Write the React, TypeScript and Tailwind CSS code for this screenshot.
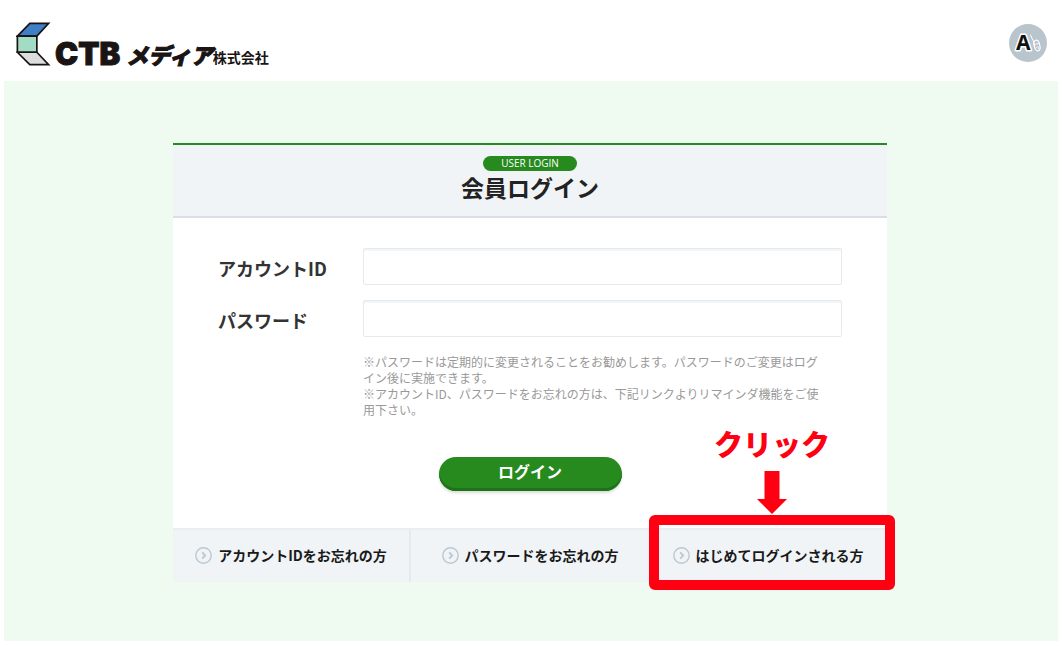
import type { ReactNode } from 'react';

function CompanyLogo() {
  return (
    <a href="#" className="flex items-end pt-[3px] text-[#1a1414]">
      <svg viewBox="50 38 104 131" className="h-[44px] w-[35px]" aria-hidden="true">
        <g stroke="#1a1414" strokeWidth="5" strokeLinejoin="miter">
          <path d="M54 80 L91 42 H147 L112 80 Z" fill="#3f7fc6" />
          <path d="M54 80 H112 V128 H54 Z" fill="#a3dcc4" />
          <path d="M54 128 H112 L147 165 H91 Z" fill="#dcdddd" />
        </g>
      </svg>
      <span className="ml-1 font-['Inter',sans-serif] text-[31px] leading-[24px] font-black [-webkit-text-stroke:1px_#1a1414]">
        CTB
      </span>
      <span className="ml-1.5 font-['Noto_Sans_CJK_JP',sans-serif] text-[22px] leading-[24px] font-black italic [-webkit-text-stroke:1px_#1a1414]">
        メディア
      </span>
      <span className="font-['Noto_Sans_CJK_JP',sans-serif] text-[14px] leading-[18px] font-bold">株式会社</span>
    </a>
  );
}

function LanguageButton() {
  return (
    <button type="button" aria-label="言語" className="h-[38px] w-[38px] rounded-full bg-[#b8c5cc]">
      <svg viewBox="0 0 38 38" className="h-full w-full" aria-hidden="true">
        <g fill="none" stroke="#fff" strokeLinecap="round" strokeLinejoin="round">
          <path d="M21.5 11 L24.5 17.5 L25.5 23" strokeWidth="1" />
          <ellipse cx="28" cy="21.5" rx="2.8" ry="5.4" strokeWidth="1.2" transform="rotate(-14 28 21.5)" />
          <path d="M26 20.5 L29.5 19.5 M27 24 C28 22 30 22 29.5 24.5" strokeWidth="0.9" />
        </g>
        <text
          x="7"
          y="26"
          fontFamily="Noto Sans"
          fontWeight="bold"
          fontSize="21"
          fill="#111"
          stroke="#fff"
          strokeWidth="3"
          strokeLinejoin="round"
          paintOrder="stroke"
        >
          A
        </text>
      </svg>
    </button>
  );
}

function CircleArrow() {
  return (
    <svg viewBox="0 0 17 17" className="h-[17px] w-[17px] shrink-0" fill="none" stroke="#b9c8d3" aria-hidden="true">
      <circle cx="8.5" cy="8.5" r="7.7" strokeWidth="1.4" />
      <path d="M7.2 5.4 L10.2 8.5 L7.2 11.6" strokeWidth="1.8" />
    </svg>
  );
}

function FooterLink({ children }: { children: ReactNode }) {
  return (
    <a
      href="#"
      className="flex h-full items-center justify-center gap-1.5 pb-0.5 text-[14px] leading-5 font-bold whitespace-nowrap text-[#1a1a1a]"
    >
      <CircleArrow />
      {children}
    </a>
  );
}

function ClickCallout() {
  return (
    <div className="pointer-events-none absolute -top-[15px] -right-2 -bottom-2 left-0 rounded-md border-10 border-[#ff0012]">
      <div className="absolute inset-x-0 bottom-full mb-[11px] flex flex-col items-center">
        <span className="text-[29px] leading-8 font-black text-[#ff0012]">クリック</span>
        <svg viewBox="0 0 30 43" className="mt-3 h-[43px] w-[30px]" aria-hidden="true">
          <path d="M7.5 0 H22.5 V28 H30 L15 43 L0 28 H7.5 Z" fill="#ff0012" />
        </svg>
      </div>
    </div>
  );
}

function FormRow({ id, label, type }: { id: string; label: string; type: string }) {
  return (
    <div className="flex items-center">
      <label htmlFor={id} className="w-[145px] shrink-0 pt-0.5 text-[18px] leading-7 font-bold text-[#333]">
        {label}
      </label>
      <input
        id={id}
        type={type}
        className="h-[37px] min-w-0 flex-1 rounded-xs border border-[#e4eaed] bg-white px-3 shadow-[inset_0_2px_0_#f3f6f8]"
      />
    </div>
  );
}

export default function App() {
  return (
    <div className="flex min-h-screen flex-col bg-white px-1 pb-[5px] font-['Noto_Sans_CJK_JP',sans-serif]">
      <header className="flex h-[81px] items-center justify-between pt-2 pr-[11px] pb-1 pl-3">
        <CompanyLogo />
        <LanguageButton />
      </header>

      <main className="flex-1 bg-[#effaf0] pt-[62px] pr-[18px] pb-[58px] pl-4">
        <form
          onSubmit={(e) => e.preventDefault()}
          className="mx-auto max-w-[714px] border-t-2 border-[#268a1e] bg-white"
        >
          <div className="flex flex-col items-center border-b-2 border-[#d9dfe4] bg-[#f0f4f6] pt-[11px] pb-3">
            <span className="rounded-full bg-[#268a1e] px-[18px] font-['Open_Sans',sans-serif] text-[10px] leading-[15px] text-white">
              USER LOGIN
            </span>
            <h1 className="text-[23px] leading-[33px] font-bold text-[#222]">会員ログイン</h1>
          </div>

          <div className="px-[45px] pt-[30px]">
            <div className="flex flex-col gap-[15px]">
              <FormRow id="account" label="アカウントID" type="text" />
              <FormRow id="password" label="パスワード" type="password" />
            </div>
            <p className="mt-[17px] ml-[145px] text-[12px] leading-4 text-[#999]">
              ※パスワードは定期的に変更されることをお勧めします。パスワードのご変更はログ
              <br />
              イン後に実施できます。
              <br />
              ※アカウントID、パスワードをお忘れの方は、下記リンクよりリマインダ機能をご使
              <br />
              用下さい。
            </p>
            <div className="flex justify-center pt-[39px] pb-[37px]">
              <button
                type="submit"
                className="h-[34px] w-[183px] rounded-full bg-[#268a1e] pb-1.5 text-[16px] leading-6 font-bold text-white shadow-[inset_0_-3px_0_#1d7418,0_2px_3px_rgba(0,0,0,0.15)]"
              >
                ログイン
              </button>
            </div>
          </div>

          <ul className="grid h-[54px] grid-cols-3 border-t-2 border-[#e9eef1] bg-[#f0f4f6]">
            <li className="border-r-2 border-[#e4e9ed]">
              <FooterLink>アカウントIDをお忘れの方</FooterLink>
            </li>
            <li>
              <FooterLink>パスワードをお忘れの方</FooterLink>
            </li>
            <li className="relative">
              <FooterLink>はじめてログインされる方</FooterLink>
              <ClickCallout />
            </li>
          </ul>
        </form>
      </main>
    </div>
  );
}
